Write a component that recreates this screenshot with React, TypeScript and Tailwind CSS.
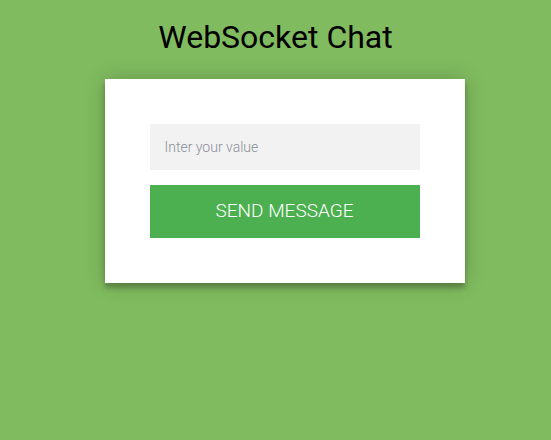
export default function App() {
  return (
    <div className="min-h-[440px] w-full bg-[#80bb5f] font-['Roboto',sans-serif] pt-[17px]">
      <h1 className="text-center text-[32px] leading-[40px] text-black">WebSocket Chat</h1>
      <div className="mt-[22px] flex justify-center pl-[18px]">
        <div className="w-[360px] bg-white p-[45px] shadow-[0_0_20px_0_rgba(0,0,0,0.2),0_5px_5px_0_rgba(0,0,0,0.24)]">
          <input
            type="text"
            placeholder="Inter your value"
            className="block h-[46px] w-full bg-[#f2f2f2] px-[15px] text-[14px] font-light text-[#333] outline-none placeholder:text-[#8a8f99]"
          />
          <button className="mt-[15px] block h-[53px] w-full bg-[#4caf50] text-[19px] font-light uppercase text-white">
            Send message
          </button>
        </div>
      </div>
    </div>
  )
}
